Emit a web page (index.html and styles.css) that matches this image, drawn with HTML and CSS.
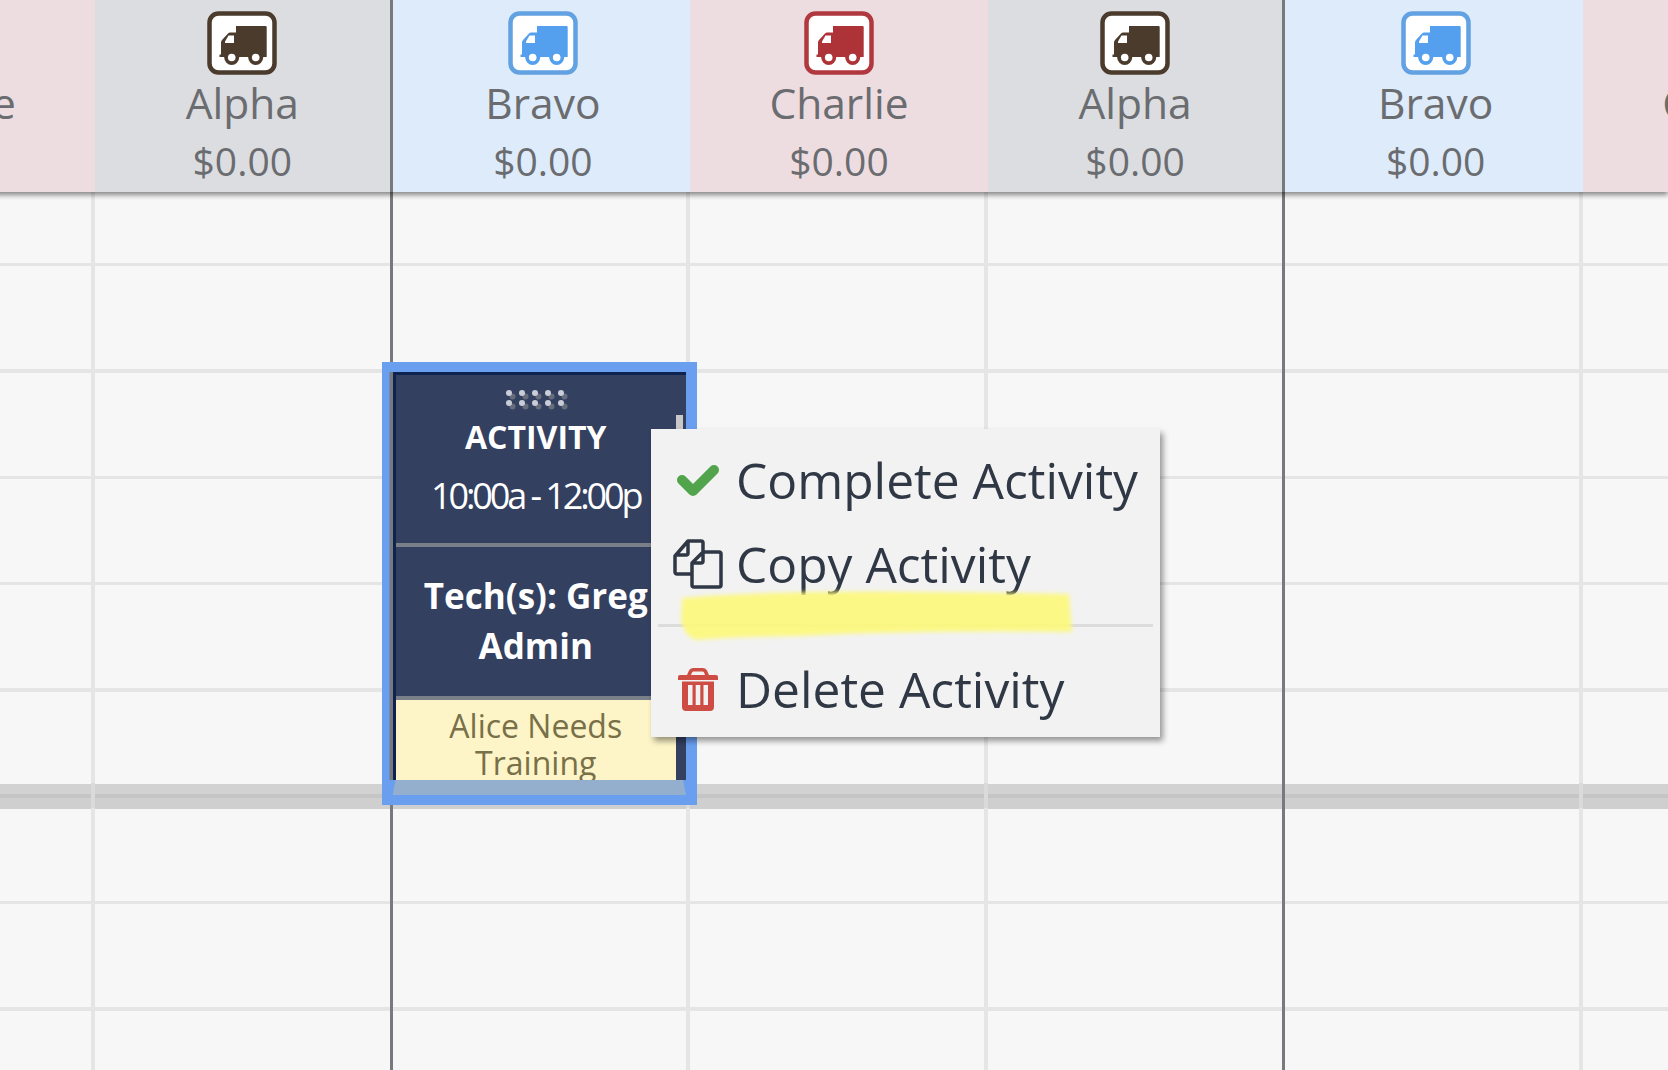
FILE: index.html
```html
<!DOCTYPE html>
<html lang="en">
<head>
<meta charset="utf-8">
<title>Schedule board</title>
<link rel="stylesheet" href="styles.css">
</head>
<body>
<svg class="defs" width="0" height="0" aria-hidden="true">
  <symbol id="truck" viewBox="0 0 70 64">
    <rect class="truck-frame" x="2.500" y="2.500" width="65" height="59" rx="9"/>
    <path class="truck-body" d="M29 15h29.500a1.200 1.200 0 0 1 1.200 1.200V46H29zM23 21.500h6V46H12.500v-2.500h1.500V31.500q0-1.500 1-2.500l6-6.500q1-1 2-1z"/>
    <path class="truck-glass" d="M21.500 24.500H27V32H18v-1.500z"/>
    <circle class="truck-body" cx="24.700" cy="46.500" r="7.500"/>
    <circle class="truck-glass" cx="24.700" cy="46.500" r="3.800"/>
    <circle class="truck-body" cx="48.700" cy="46.500" r="7.500"/>
    <circle class="truck-glass" cx="48.700" cy="46.500" r="3.800"/>
  </symbol>
</svg>

<header class="head">
  <div class="unit pink"><svg class="truck t-red"><use href="#truck"/></svg><div class="name">Charlie</div><div class="amount">$0.00</div></div>
  <div class="unit gray split"><svg class="truck t-brown"><use href="#truck"/></svg><div class="name">Alpha</div><div class="amount">$0.00</div></div>
  <div class="unit blue"><svg class="truck t-blue"><use href="#truck"/></svg><div class="name">Bravo</div><div class="amount">$0.00</div></div>
  <div class="unit pink"><svg class="truck t-red"><use href="#truck"/></svg><div class="name">Charlie</div><div class="amount">$0.00</div></div>
  <div class="unit gray split"><svg class="truck t-brown"><use href="#truck"/></svg><div class="name">Alpha</div><div class="amount">$0.00</div></div>
  <div class="unit blue"><svg class="truck t-blue"><use href="#truck"/></svg><div class="name">Bravo</div><div class="amount">$0.00</div></div>
  <div class="unit pink"><svg class="truck t-red"><use href="#truck"/></svg><div class="name">Charlie</div><div class="amount">$0.00</div></div>
</header>

<main class="grid">
  <div class="col"></div>
  <div class="col dark"></div>
  <div class="col"></div>
  <div class="col"></div>
  <div class="col dark"></div>
  <div class="col"></div>
  <div class="col"></div>

  <article class="card">
    <div class="card-inner">
      <section class="card-top">
        <svg class="grip" width="64" height="24" viewBox="0 0 64 24" aria-hidden="true">
          <g class="grip-dark">
            <circle cx="7.500" cy="7.500" r="3"/><circle cx="20.500" cy="7.500" r="3"/><circle cx="33.500" cy="7.500" r="3"/><circle cx="46.500" cy="7.500" r="3"/><circle cx="59.500" cy="7.500" r="3"/>
            <circle cx="7.500" cy="17.500" r="3"/><circle cx="20.500" cy="17.500" r="3"/><circle cx="33.500" cy="17.500" r="3"/><circle cx="46.500" cy="17.500" r="3"/><circle cx="59.500" cy="17.500" r="3"/>
          </g>
          <g class="grip-light">
            <circle cx="4" cy="4" r="3"/><circle cx="17" cy="4" r="3"/><circle cx="30" cy="4" r="3"/><circle cx="43" cy="4" r="3"/><circle cx="56" cy="4" r="3"/>
            <circle cx="4" cy="14" r="3"/><circle cx="17" cy="14" r="3"/><circle cx="30" cy="14" r="3"/><circle cx="43" cy="14" r="3"/><circle cx="56" cy="14" r="3"/>
          </g>
        </svg>
        <div class="card-title">ACTIVITY</div>
        <div class="card-time">10:00a - 12:00p</div>
      </section>
      <section class="card-tech">Tech(s): Greg Admin</section>
      <section class="card-note">Alice Needs Training</section>
      <div class="thumb"></div>
    </div>
    <div class="card-foot"></div>
  </article>

  <nav class="menu">
    <div class="item">
      <span class="slot"><svg width="44" height="34" viewBox="0 0 44 34" aria-hidden="true"><path class="i-check" d="M6 17l11 11L38 7"/></svg></span>
      <span>Complete Activity</span>
    </div>
    <div class="item">
      <span class="slot"><svg width="50" height="50" viewBox="0 0 50 50" aria-hidden="true"><path class="i-copy" d="M19 35H4a2 2 0 0 1-2-2V17L15 2h13a2 2 0 0 1 2 2v9M15 2v12a2 2 0 0 1-2 2H2M19 24L30 13h16a2 2 0 0 1 2 2v31a2 2 0 0 1-2 2H21a2 2 0 0 1-2-2zM30 13v9a2 2 0 0 1-2 2h-9"/></svg></span>
      <span>Copy Activity</span>
    </div>
    <hr class="rule">
    <div class="item">
      <span class="slot"><svg width="40" height="43" viewBox="0 0 40 43" aria-hidden="true"><path class="i-trash" fill-rule="evenodd" d="M15 0h10q3 0 4 2.500L31 7h7q2 0 2 2v3H0V9q0-2 2-2h7l2-4.500Q12 0 15 0zm.5 3.500q-1 0-1.500 1L13 7h14l-1-2.500q-.5-1-1.500-1zM4 13.500h32V39q0 4-4 4H8q-4 0-4-4zM10 17v20h4.500V17zm7.700 0v20h4.600V17zm7.800 0v20H30V17z"/></svg></span>
      <span>Delete Activity</span>
    </div>
  </nav>

  <svg class="marker" width="395" height="50" viewBox="0 0 395 50" aria-hidden="true"><path d="M4 8Q100 0 250 2Q340 3 391 4L394 42Q240 40 120 46Q50 47 18 50Q6 46 3 30Z"/></svg>
</main>
</body>
</html>
```
FILE: styles.css
```css
* { box-sizing: border-box; }
html, body { margin: 0; height: 100%; overflow: hidden; }
body { font-family: "Open Sans", "Liberation Sans", sans-serif; background: #f7f7f7; width: 1668px; height: 1070px; display: flex; flex-direction: column; }
.defs { display: block; height: 0; }

.head { display: flex; flex: none; height: 192px; margin-left: -202.6px; position: relative; z-index: 2; box-shadow: 0 3px 5px rgba(0,0,0,.45); }
.unit { flex: none; width: 297.6px; height: 192px; display: flex; flex-direction: column; align-items: center; text-align: center; padding-top: 11px; }
.pink { background: #eddde1; }
.gray { background: #dcdde0; }
.blue { background: #deebfa; padding-left: 3px; }
.split { border-right: 3px solid #77797c; }
.truck { width: 70px; height: 64px; display: block; }
.truck-frame { fill: #fff; stroke: var(--frame); stroke-width: 4.5px; }
.truck-body { fill: var(--ink); }
.truck-glass { fill: #fff; }
.t-brown { --frame: #4a3b2c; --ink: #4a3b2c; }
.t-blue { --frame: #62a1e2; --ink: #54a0ef; }
.t-red { --frame: #b0383e; --ink: #ae3338; }
.name { font-size: 42.5px; line-height: 52px; margin-top: 2px; color: #6a6c70; white-space: nowrap; }
.amount { font-size: 39px; line-height: 52px; margin-top: 6px; color: #6a6c70; white-space: nowrap; }

.grid { flex: 1; display: flex; margin-left: -202.6px; position: relative;
  background-color: #f7f7f7;
  background-image:
    linear-gradient(#d2d2d2 0 10.500px, #c5c5c5 10.500px 13.500px, #cfcfcf 13.500px 25px),
    repeating-linear-gradient(transparent 0 71px, #e5e5e5 71px 74.500px, transparent 74.500px 106.300px);
  background-size: 100% 25px, 100% 100%;
  background-position: 0 591.500px, 0 0;
  background-repeat: no-repeat, no-repeat;
}
.col { flex: none; width: 297.6px; background: linear-gradient(#e5e5e5 0 591.500px, #dadada 591.500px 616.500px, #e5e5e5 616.500px) right / 4px 100% no-repeat; }
.col.dark { background: none; border-right: 3.200px solid #77797c; }

.card { position: absolute; left: 584.6px; top: 170px; width: 315px; height: 443px; background: #6a9ff0; padding: 10px 11px 10px 10.5px; display: flex; flex-direction: column; }
.card-inner { flex: none; height: 408px; position: relative; background: #334060; border: solid #0f2350; border-width: 3.500px 0 0 3.500px; box-shadow: -3.500px 0 0 #77797c; color: #fff; text-align: center; display: flex; flex-direction: column; padding-right: 10px; }
.card-top { flex: none; height: 171.500px; border-bottom: 4px solid #7a7f8a; display: flex; flex-direction: column; align-items: center; padding-top: 14px; }
.grip { display: block; margin-bottom: -2px; margin-left: 3px; }
.grip-light { fill: #c9cdd8; }
.grip-dark { fill: #676c7b; }
.card-title { font-size: 32px; font-weight: 700; line-height: 44px; margin-top: 4px; }
.card-time { font-size: 36px; line-height: 44px; letter-spacing: -3.1px; margin-top: 15px; white-space: nowrap; }
.card-tech { flex: none; height: 153px; border-bottom: 4px solid #7a7f8a; font-size: 35px; font-weight: 700; line-height: 50px; padding-top: 24px; }
.card-note { flex: none; height: 80px; background: #fdf4c8; color: #787048; font-size: 32px; line-height: 37px; overflow: hidden; padding: 7px 20px 0; }
.thumb { position: absolute; right: 3px; top: 39.500px; width: 7px; height: 40px; background: #c8c8c8; }
.card-foot { flex: none; height: 15px; background: #94aecd; clip-path: polygon(3px 0, calc(100% - 3px) 0, 100% 100%, 0 100%); }

.menu { position: absolute; left: 853.6px; top: 237px; width: 509px; height: 308px; background: #f2f2f2; box-shadow: 3px 4px 6px rgba(0,0,0,.4); padding-top: 9px; color: #303845; }
.item { display: flex; align-items: center; gap: 13.500px; height: 84px; padding-left: 21.500px; font-size: 49.7px; line-height: 84px; white-space: nowrap; }
.slot { flex: none; width: 50px; display: flex; justify-content: center; align-items: center; }
.slot svg { display: block; }
.i-check { fill: none; stroke: #52a44c; stroke-width: 10px; stroke-linejoin: round; stroke-linecap: round; }
.i-copy { fill: none; stroke: #303845; stroke-width: 3.500px; stroke-linejoin: round; }
.i-trash { fill: #cd4d45; }
.rule { border: 0; height: 3px; background: #dcdcdc; margin: 18px 7px 20px; }
.marker { position: absolute; left: 880.6px; top: 398px; opacity: .9; filter: blur(2px); }
.marker path { fill: #fdf97a; }
```
